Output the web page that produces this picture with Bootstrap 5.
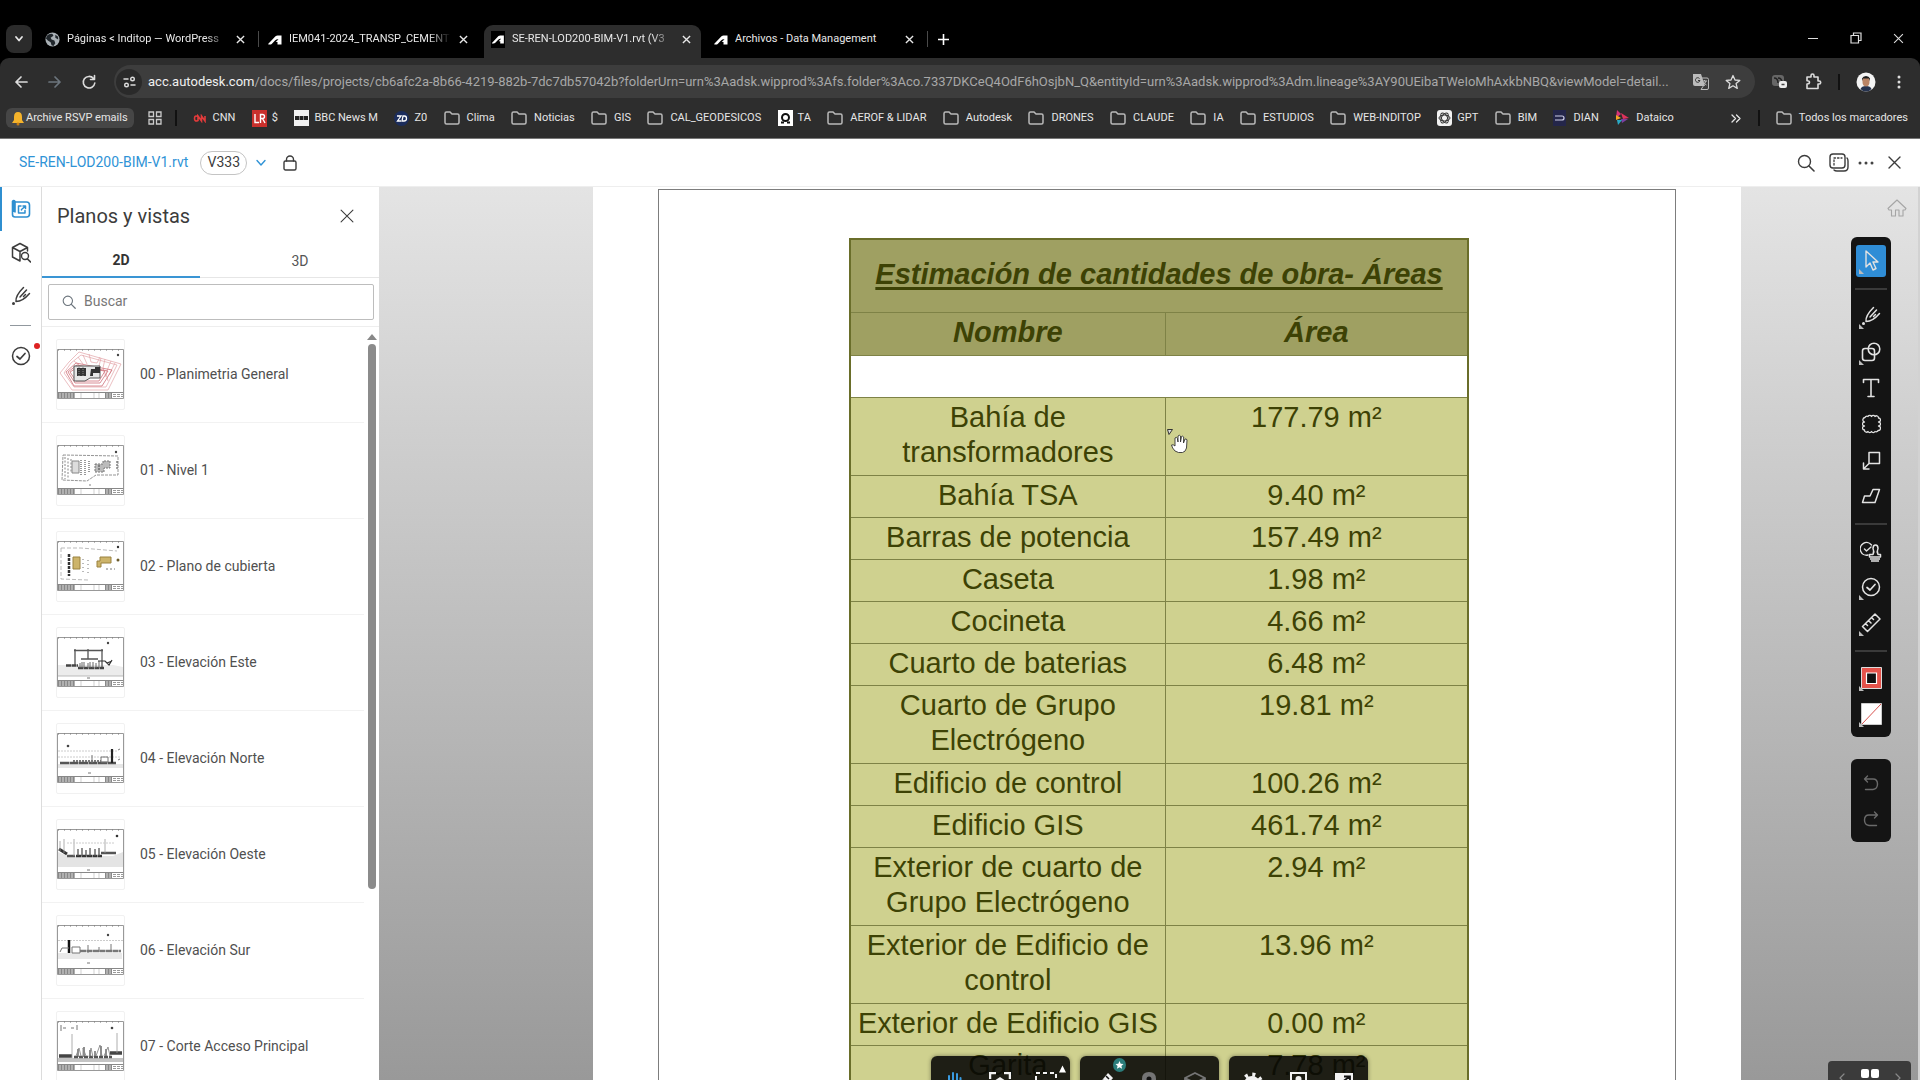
<!DOCTYPE html>
<html lang="es">
<head>
<meta charset="utf-8">
<meta name="viewport" content="width=device-width, initial-scale=1">
<title>SE-REN-LOD200-BIM-V1.rvt (V333)</title>
<link href="https://cdn.jsdelivr.net/npm/bootstrap@5.3.0/dist/css/bootstrap.min.css" rel="stylesheet">
<style>
body{font-family:Roboto,"Noto Sans",sans-serif;font-size:14px;color:#3c3c3c;background:#fff}
svg{display:block;flex:none}
.ln{fill:none;stroke:currentColor;stroke-linecap:round;stroke-linejoin:round}
.plain{background:none;border:0;padding:0;color:inherit;display:flex;align-items:center;justify-content:center;flex:none}
/* browser */
.tabstrip{background:#000;padding:25px 6px 0;height:58px;color:#e8e8e8;font-size:11px}
.tabsearch{width:26px;height:28px;border-radius:8px;background:#2b2b2b;margin-right:6px}
.btab{width:223px;height:33px;padding-right:6px;flex:none;position:relative}
.btab-in{height:33px;padding:0 10px 4px 7px;border-radius:9px 9px 0 0}
.btab-in.on{background:#2d2d2d}
.btab-in .ttl{flex:1;min-width:0;overflow:hidden;white-space:nowrap;margin-left:7px;margin-right:8px;color:#e8e8e8;text-decoration:none}
.btab-in .fade-end{-webkit-mask-image:linear-gradient(90deg,#000 86%,transparent);mask-image:linear-gradient(90deg,#000 86%,transparent)}
.btab.sep::after{content:"";position:absolute;right:2px;top:6px;width:1px;height:16px;background:#4a4a4a}
.winbtns{gap:31px;padding-right:10px;height:26px}
.navrow{background:#2d2d2d;height:46px;padding:7px 18px 6px 12px;border-radius:9px 9px 0 0;color:#dcdcdc}
.navblock{background:#000}
.omni{background:#3d3d3d;border-radius:17px;height:33px;padding:0 14px 0 2px;min-width:0}
.siteinfo{width:26px;height:26px;border-radius:50%;background:#2a2a2a}
.url{color:#a8a8a8;font-size:13px;min-width:0;white-space:nowrap;margin-left:6px}
.url b{font-weight:400;color:#f0f0f0}
.bmrow{background:#2d2d2d;height:35px;padding:0 12px 6px 6px;color:#e6e6e6;font-size:11px;border-bottom:1px solid #777}
.bmrow a{color:#e6e6e6;text-decoration:none;display:flex;align-items:center;white-space:nowrap;gap:7px}
.bmrow a.fav{gap:5px}
.bmrow a.chip{background:#464646;border-radius:6px;height:20px;padding:0 6px 0 5px;gap:1px}
.bmapps{margin:0 13px 0 14px}
.vsep{width:2px;height:16px;background:#111;flex:none}
/* app header */
.apphead{height:49px;padding:0 19px;border-bottom:1px solid #eee}
.fname{color:#2f93d6;text-decoration:none;font-size:14px;margin-right:12px}
.ver{border:1px solid #c4c4c4;border-radius:12px;height:24px;width:47px;font-size:14px;color:#3c3c3c;background:#fff;padding:0}
.headicons{gap:14px}
.headicons .tight{margin-left:-5px}
/* rail and panel */
.rail{width:42px;border-right:1px solid #dcdcdc;flex:none}
.railbtn{width:41px;height:43px}
.railbtn.on{color:#2f8fd0;border-left:2px solid #2f8fd0;height:44px;padding-right:2px}
.panel{width:337px;flex:none}
.phead{padding:17px 25px 16px 15px}
.ptitle{font-size:20px;font-weight:400;color:#3c3c3c;margin:0}
.ptabs{height:34px;border-bottom:1px solid #e6e6e6;color:#555}
.ptabs button{border:0;background:none;height:34px;padding:0;color:#555}
.ptabs .t2d{width:158px;border-bottom:2px solid #3a95d4;font-weight:700;color:#333}
.ptabs .t3d{width:179px;padding-left:21px}
.sbox{margin:6px;height:36px;border:1px solid #bdbdbd;border-radius:2px;padding:0 13px;width:326px}
.sbox input{border:0;outline:0;background:none;flex:1;min-width:0;padding:0;color:#555}
.sbox input::placeholder{color:#777;opacity:1}
.vlist{border-top:1px solid #eee}
.vitem{display:flex;align-items:center;height:96px;border-bottom:1px solid #f2f2f2;padding-left:14px;color:#505050;text-decoration:none;gap:15px}
.thumb{border:1px solid #f1f1f1;border-radius:2px;width:69px;height:71px;display:flex;align-items:center}
.sbar{width:15px;padding-top:7px;flex:none}
.sthumb{width:8px;height:545px;border-radius:4px;background:#8b8b8b;flex:none}
/* canvas */
.stage{background:linear-gradient(#e4e4e4,#c9c9c9 35%,#999);border-right:2px solid #d2d2d2;min-width:0}
.sheet{margin:0 177px 0 214px;background:#fff;padding:2px 65px 0 65px;height:100%;overflow:hidden}
.sheetframe{border:1px solid #7d7d7d;border-bottom:0;height:110%;padding:48px 0 0 190px}
.qty{width:620px;border-collapse:collapse;font-family:"Liberation Sans",Arial,sans-serif;font-size:29px;line-height:35px;color:#3d4205;text-align:center;border:2px solid #6a6e2a;table-layout:fixed}
.qty td,.qty th{border:1px solid #7e8246;padding:2px 4px 4px;vertical-align:top;background:#cfd18f}
.qty tbody .two td{height:78px}
.qty thead th{background:#9fa062;font-style:italic;font-weight:700}
.qty thead .big th{height:73px;vertical-align:middle;text-decoration:underline;text-decoration-thickness:3px;text-underline-offset:3px}
.qty thead .cols th{height:43px}
.qty .blank td{background:#fff;height:42px}
/* floating tools */
.vtools{right:27px;width:40px;background:#141414;border-radius:6px;color:#e2e2e2}
.vtools.main{top:50px;padding:6px 0 5px}
.vtools.hist{top:572px;padding:6px 0 5px;color:#6a6a6a}
.vtools button{width:40px;height:36px;position:relative}
.vtools hr{margin:9px 4px 8px;border:0;border-top:2px solid #3a3a3a;opacity:1;height:0}
.vtools .fly::before{content:"";position:absolute;left:8px;bottom:5px;border-left:5px solid #bbb;border-top:5px solid transparent}
.selbg{background:#2f8dd6;border-radius:3px;width:30px;height:32px;display:flex;align-items:center;justify-content:center}
.homebtn{right:11px;top:12px;color:#a5a5a5}
.btools{left:552px;bottom:-32px;gap:10px}
.bgroup{background:rgba(8,8,6,.89);border-radius:6px;height:56px;width:139px;color:#f2f2f2;box-shadow:0 0 4px rgba(0,0,0,.4)}
.bgroup button{width:46px;height:56px;position:relative}
.newdot{position:absolute;right:9px;top:2px}
.bgroup .corner{top:9px;right:3px}
.pager{right:7px;bottom:-28px;width:83px;height:47px;background:#3b3b3b;border-radius:4px;color:#888}
.cur{left:788px;top:242px;pointer-events:none}
</style>
</head>
<body class="overflow-hidden">
<svg width="0" height="0" class="position-absolute" aria-hidden="true">
<defs>
<symbol id="folder" viewBox="0 0 16 14"><path d="M1 2.500Q1 1 2.500 1H6l2 2h5.500Q15 3 15 4.500v7Q15 13 13.500 13h-11Q1 13 1 11.500Z" fill="none" stroke="#b9b9b9" stroke-width="1.500"/></symbol>
<symbol id="x" viewBox="0 0 10 10"><path d="M1 1l8 8M9 1L1 9" fill="none" stroke="currentColor" stroke-width="1.500"/></symbol>
<symbol id="adsk" viewBox="0 0 14 10"><path d="M.300 8.800L7.500 1.200Q8.500.500 9.500.500H13.500V9.500H9.500V7H7.800L10.500 4.300Q8.500 4 7 5.500L3.700 9Q3 9.500 2 9.500H.300Z" fill="#fff"/></symbol>
<symbol id="pen" viewBox="0 0 20 20"><path class="ln" d="M5 15.500C4.500 12 6 8 12.500 1.500M5 15.500C9 15.500 13 14 18.500 7.500M9 11L15.500 4M12.500 10.500L14.500 8.500" stroke-width="1.500"/><circle cx="2.500" cy="17.500" r="1.500" fill="currentColor"/></symbol>
<symbol id="okc" viewBox="0 0 20 20"><circle class="ln" cx="10" cy="10" r="8.500" stroke-width="1.500"/><path class="ln" d="M6 10.500l3 2.500 5-5.500" stroke-width="1.700"/></symbol>
<symbol id="mag" viewBox="0 0 18 18"><circle class="ln" cx="7.500" cy="7.500" r="6" stroke-width="1.400"/><path class="ln" d="M12 12l5 5" stroke-width="1.600"/></symbol>
<!-- title block shared by every drawing sheet -->
<symbol id="fr" viewBox="0 0 67 50"><path d="M.5 .5h66v49H.5z" fill="#fff" stroke="#999"/><path d="M1 1h65" stroke="#777" stroke-dasharray="1 5"/><path d="M.5 43.500h66" stroke="#888"/><path d="M1 46.500h17M48 46.500h7" stroke="#b0b0b0" stroke-width="5"/><path d="M1 46.500h17M48 46.500h7" stroke="#888" stroke-width="5" stroke-dasharray="1 2"/><path d="M56 45.500h10M56 47.500h10" stroke="#999" stroke-dasharray="3 1"/><path d="M24 44v5M37 44v5M42 44v5" stroke="#bbb" stroke-width=".700"/></symbol>
</defs>
</svg>
<div class="vh-100 d-flex flex-column">
<header>
 <div class="tabstrip d-flex">
  <button class="plain tabsearch" aria-label="Buscar pestañas"><svg width="10" height="8" viewBox="0 0 10 8"><path class="ln" d="M2 2l3 3.500L8 2" stroke-width="1.800"/></svg></button>
  <div class="btab sep"><div class="btab-in d-flex align-items-center"><svg width="15" height="15" viewBox="0 0 16 16"><circle cx="8" cy="8" r="7.500" fill="#a9b0b5"/><path d="M2 4q3-3 6-2l1 2-3 2 1 2 3 1 1 3-2 3-2-1-1-3-3-2-2-2zM11 3l3 2v3l-3-2z" fill="#20262b"/></svg><a href="#" class="ttl fade-end">Páginas &lt; Inditop — WordPress</a><button class="plain" aria-label="Cerrar"><svg width="9" height="9"><use href="#x"/></svg></button></div></div>
  <div class="btab"><div class="btab-in d-flex align-items-center"><svg width="14" height="10"><use href="#adsk"/></svg><a href="#" class="ttl fade-end">IEM041-2024_TRANSP_CEMENT</a><button class="plain" aria-label="Cerrar"><svg width="9" height="9"><use href="#x"/></svg></button></div></div>
  <div class="btab"><div class="btab-in on d-flex align-items-center"><span class="bg-black d-flex align-items-center justify-content-center py-1"><svg width="14" height="9"><use href="#adsk"/></svg></span><a href="#" class="ttl fade-end">SE-REN-LOD200-BIM-V1.rvt (V3</a><button class="plain" aria-label="Cerrar"><svg width="9" height="9"><use href="#x"/></svg></button></div></div>
  <div class="btab sep"><div class="btab-in d-flex align-items-center"><svg width="14" height="10"><use href="#adsk"/></svg><a href="#" class="ttl">Archivos - Data Management</a><button class="plain" aria-label="Cerrar"><svg width="9" height="9"><use href="#x"/></svg></button></div></div>
  <button class="plain ms-2 mb-1" aria-label="Nueva pestaña"><svg width="11" height="11" viewBox="0 0 11 11"><path d="M5.500 0v11M0 5.500h11" stroke="#fff" stroke-width="1.600"/></svg></button>
  <div class="winbtns d-flex ms-auto">
   <button class="plain" aria-label="Minimizar"><svg width="11" height="11"><path d="M0 5.500h10" stroke="#ddd"/></svg></button>
   <button class="plain" aria-label="Restaurar"><svg width="12" height="12"><path d="M1 3.500h7.500V11H1zM3.500 3V1H11v7.500H9" fill="none" stroke="#ddd" stroke-width="1.200"/></svg></button>
   <button class="plain" aria-label="Cerrar ventana"><svg width="11" height="11" viewBox="0 0 10 10"><path d="M1 1l8 8M9 1L1 9" stroke="#ddd"/></svg></button>
  </div>
 </div>
 <div class="navblock"><div class="navrow d-flex align-items-center">
  <button class="plain" aria-label="Atrás"><svg width="18" height="14" viewBox="0 0 18 14"><path class="ln" d="M15 7H4M9 2L4 7l5 5" stroke-width="1.700"/></svg></button>
  <button class="plain text-secondary ms-3" aria-label="Adelante"><svg width="18" height="14" viewBox="0 0 18 14"><path class="ln" d="M3 7h11M9 2l5 5-5 5" stroke-width="1.700"/></svg></button>
  <button class="plain ms-3 me-3" aria-label="Recargar"><svg width="18" height="16" viewBox="0 0 18 16"><path class="ln" d="M13.500 4.500A5.800 5.800 0 1 0 14.800 9M14.500 1.500v4h-4" stroke-width="1.600"/></svg></button>
  <div class="omni d-flex align-items-center flex-grow-1">
   <button class="plain siteinfo" aria-label="Información del sitio"><svg width="13" height="12" viewBox="0 0 13 12"><path class="ln" d="M1 3h4M8 9h4" stroke-width="1.500"/><circle class="ln" cx="9.500" cy="3" r="1.800" stroke-width="1.400"/><circle class="ln" cx="3.500" cy="9" r="1.800" stroke-width="1.400"/></svg></button>
   <div class="url flex-grow-1"><b>acc.autodesk.com</b>/docs/files/projects/cb6afc2a-8b66-4219-882b-7dc7db57042b?folderUrn=urn%3Aadsk.wipprod%3Afs.folder%3Aco.7337DKCeQ4OdF6hOsjbN_Q&amp;entityId=urn%3Aadsk.wipprod%3Adm.lineage%3AY90UEibaTWeIoMhAxkbNBQ&amp;viewModel=detail...</div>
   <button class="plain me-3" aria-label="Traducir"><svg width="16" height="16" viewBox="0 0 16 16"><path d="M0 0h8l4 12H2Q0 12 0 10z" fill="#bbb"/><path d="M8 4h6q1.500 0 1.500 1.500V14q0 1.500-1.500 1.500H8l2-3z" fill="none" stroke="#bbb"/><path d="M9 7h5M11.500 6v1M13 7q-1 3-3 4M10.500 8q1 2 3 3" stroke="#bbb" fill="none"/><path d="M6.500 4.500A2.300 2.300 0 1 0 7 6.500H5" stroke="#333" fill="none"/></svg></button>
   <button class="plain" aria-label="Marcador"><svg width="16" height="16" viewBox="0 0 16 16"><path class="ln" d="M8 1.500l2 4.500 4.800.400-3.700 3.200 1.200 4.800L8 11.800l-4.300 2.600 1.200-4.800L1.200 6.400 6 6z" stroke-width="1.300"/></svg></button>
  </div>
  <button class="plain ms-3" aria-label="Extensión"><svg width="18" height="16" viewBox="0 0 18 16"><rect x="1" y="1" width="12" height="11" rx="3" fill="#666"/><path d="M3 4q4 0 4 5M7 4q4 0 4 5" stroke="#222" fill="none" stroke-width="1.500"/><rect x="8" y="7" width="8" height="7" rx="2" fill="#eee"/><path d="M10.500 10.500h3" stroke="#444" stroke-width="1.500"/></svg></button>
  <button class="plain ms-3" aria-label="Extensiones"><svg width="17" height="17" viewBox="0 0 17 17"><path class="ln" d="M2 4h4V2.500a1.500 1.500 0 0 1 3 0V4h4v4h1.200a1.500 1.500 0 0 1 0 3H13v4.500H2V11q2.500 0 2.500-1.700T2 7.700z" stroke-width="1.600"/></svg></button>
  <span class="vsep ms-3"></span>
  <button class="plain ms-3" aria-label="Perfil"><svg width="20" height="20" viewBox="0 0 20 20"><circle cx="10" cy="10" r="9.500" fill="#f4f4f4"/><path d="M4.500 17q1-3 5.500-3t5.500 3q-2 2.500-5.500 2.500T4.500 17z" fill="#26334f"/><path d="M6.500 8q0-3 3.500-3t3.500 3v2q0 4-3.500 4.500Q6.500 14 6.500 10z" fill="#b98466"/><path d="M6 9V6.500Q7 4 10 4t4 2.500V9l-1-2.500H7z" fill="#1c1c1c"/></svg></button>
  <button class="plain ms-3 ps-1" aria-label="Menú"><svg width="6" height="16" viewBox="0 0 6 16"><g fill="#ddd"><circle cx="3" cy="3" r="1.500"/><circle cx="3" cy="8" r="1.500"/><circle cx="3" cy="13" r="1.500"/></g></svg></button>
 </div></div>
 <nav class="bmrow d-flex align-items-center" aria-label="Marcadores">
  <a href="#" class="chip"><svg width="14" height="15" viewBox="0 0 14 15"><path d="M7 1q4 0 4 5v3l2 3H1l2-3V6q0-5 4-5z" fill="#f5b32b"/><circle cx="7" cy="13" r="1.500" fill="#c77d13"/></svg>Archive RSVP emails</a>
  <a href="#" class="bmapps" aria-label="Aplicaciones"><svg width="14" height="14" viewBox="0 0 14 14"><path d="M1 1h4.500v4.500H1zM8.500 1H13v4.500H8.500zM1 8.500h4.500V13H1zM8.500 8.500H13V13H8.500z" fill="none" stroke="#ccc" stroke-width="1.300"/></svg></a>
  <span class="vsep me-3"></span>
  <div class="d-flex align-items-center justify-content-between flex-grow-1">
  <a href="#" class="fav"><svg width="15" height="9" viewBox="0 0 15 9"><path d="M5 2.500Q1.500 1 1.500 4.500T5 6.500V2l3.500 5V2l3.500 5V2" fill="none" stroke="#e33b3b" stroke-width="1.600"/></svg>CNN</a>
  <a href="#" class="fav"><svg width="15" height="17" viewBox="0 0 15 17"><path d="M0 0h15v17H0z" fill="#c9302c"/><path d="M3 4v8.500h4M8.500 13V4.500h2q2 0 2 2t-2 2h-2M10.500 8.500l2.500 4.500" stroke="#fff" stroke-width="1.400" fill="none"/></svg>$</a>
  <a href="#" class="fav"><svg width="15" height="16" viewBox="0 0 15 16"><path d="M0 0h15v16H0z" fill="#f2f2f2"/><path d="M1 6h4v4H1zM5.500 6h4v4h-4zM10 6h4v4h-4z" fill="#222"/></svg>BBC News M</a>
  <a href="#" class="fav"><svg width="15" height="15" viewBox="0 0 15 15"><circle cx="7.500" cy="7.500" r="7.500" fill="#1c2d5c"/><path d="M3 5h4L3.500 10H7M9 5h1.500q2 0 2 2.500T10 10H8z" fill="none" stroke="#fff" stroke-width="1.300"/></svg>Z0</a>
  <a href="#"><svg width="16" height="14"><use href="#folder"/></svg>Clima</a>
  <a href="#"><svg width="16" height="14"><use href="#folder"/></svg>Noticias</a>
  <a href="#"><svg width="16" height="14"><use href="#folder"/></svg>GIS</a>
  <a href="#"><svg width="16" height="14"><use href="#folder"/></svg>CAL_GEODESICOS</a>
  <a href="#" class="fav"><svg width="15" height="16" viewBox="0 0 15 16"><path d="M0 0h15v16H0z" fill="#fff"/><circle cx="7.500" cy="7.500" r="3.500" fill="none" stroke="#111" stroke-width="2"/><path d="M3 12.500h3M9 12.500h3" stroke="#111" stroke-width="2"/></svg>TA</a>
  <a href="#"><svg width="16" height="14"><use href="#folder"/></svg>AEROF &amp; LIDAR</a>
  <a href="#"><svg width="16" height="14"><use href="#folder"/></svg>Autodesk</a>
  <a href="#"><svg width="16" height="14"><use href="#folder"/></svg>DRONES</a>
  <a href="#"><svg width="16" height="14"><use href="#folder"/></svg>CLAUDE</a>
  <a href="#"><svg width="16" height="14"><use href="#folder"/></svg>IA</a>
  <a href="#"><svg width="16" height="14"><use href="#folder"/></svg>ESTUDIOS</a>
  <a href="#"><svg width="16" height="14"><use href="#folder"/></svg>WEB-INDITOP</a>
  <a href="#" class="fav"><svg width="15" height="16" viewBox="0 0 15 16"><rect width="15" height="16" rx="3" fill="#f2f2f2"/><g fill="none" stroke="#333"><ellipse cx="7.500" cy="8" rx="5.500" ry="3"/><ellipse cx="7.500" cy="8" rx="5.500" ry="3" transform="rotate(60 7.500 8)"/><ellipse cx="7.500" cy="8" rx="5.500" ry="3" transform="rotate(120 7.500 8)"/></g></svg>GPT</a>
  <a href="#"><svg width="16" height="14"><use href="#folder"/></svg>BIM</a>
  <a href="#"><svg width="13" height="16" viewBox="0 0 13 16"><path d="M0 0h13v16H0z" fill="#24264a"/><path d="M2 6h7q2 0 2 2t-2 2H2" fill="none" stroke="#d0d0e8" stroke-width="1.200"/></svg>DIAN</a>
  <a href="#"><svg width="14" height="16" viewBox="0 0 14 16"><path d="M2 0l4 4-5 4z" fill="#d8337a"/><path d="M1 5l5 3-5 2z" fill="#f6a623"/><path d="M6 3l8 5-6 1z" fill="#e0325c"/><path d="M6 9l7 0-6 4z" fill="#7b3fa0"/><path d="M2 10l5 0-4 5z" fill="#29a9c5"/></svg>Dataico</a>
  </div>
  <button class="plain ms-5 ps-2" aria-label="Más marcadores"><svg width="12" height="9" viewBox="0 0 12 9"><path class="ln" d="M2 1l3.500 3.500L2 8M6.500 1L10 4.500 6.500 8" stroke-width="1.300"/></svg></button>
  <span class="vsep ms-3 me-3"></span>
  <a href="#"><svg width="16" height="14"><use href="#folder"/></svg>Todos los marcadores</a>
 </nav>
</header>

<div class="apphead d-flex align-items-center">
 <a href="#" class="fname">SE-REN-LOD200-BIM-V1.rvt</a>
 <button class="ver">V333</button>
 <button class="plain ms-2" aria-label="Versiones"><svg width="12" height="8" viewBox="0 0 12 8" color="#2f93d6"><path class="ln" d="M2 1.500l4 4.500 4-4.500" stroke-width="1.400"/></svg></button>
 <button class="plain ms-3" aria-label="Bloqueado"><svg width="14" height="16" viewBox="0 0 14 16"><rect class="ln" x="1" y="6" width="12" height="9" rx="1.500" stroke-width="1.400"/><path class="ln" d="M3.500 6V4.500a3.500 3.500 0 0 1 7 0V6" stroke-width="1.400"/></svg></button>
 <div class="headicons d-flex align-items-center ms-auto">
 <button class="plain" aria-label="Buscar"><svg width="18" height="18"><use href="#mag"/></svg></button>
 <button class="plain" aria-label="Comparar"><svg width="20" height="19" viewBox="0 0 20 19"><rect class="ln" x="1" y="1" width="15" height="14" rx="3" stroke-width="1.400"/><path class="ln" d="M18 5q1 1 1 3v6q0 4-4 4H8q-2 0-3-1" stroke-width="1.400"/><path class="ln" d="M5 12V5h8" stroke-width="1.300" stroke-dasharray="1.500 2"/></svg></button>
 <button class="plain tight" aria-label="Más"><svg width="16" height="4" viewBox="0 0 16 4"><g fill="#444"><circle cx="2" cy="2" r="1.500"/><circle cx="8" cy="2" r="1.500"/><circle cx="14" cy="2" r="1.500"/></g></svg></button>
 <button class="plain" aria-label="Cerrar"><svg width="13" height="13" viewBox="0 0 13 13"><path class="ln" d="M1 1l11 11M12 1L1 12" stroke-width="1.400"/></svg></button>
 </div>
</div>

<div class="d-flex flex-grow-1 overflow-hidden">
 <nav class="rail d-flex flex-column" aria-label="Herramientas">
  <button class="plain railbtn on" aria-label="Planos"><svg width="20" height="20" viewBox="0 0 20 20"><path class="ln" d="M4 3h11.500Q18.500 3 18.500 6v9q0 3-3 3H4q-2.500 0-2.500-2.500V2.500Q2.700.500 4 2.500V13" stroke-width="1.600"/><path d="M1.500 2.500Q3 1 4 2.500V13H1.500z" fill="currentColor"/><path class="ln" d="M10 7H7.500v7H14v-2.500M12 7h2.500v2.500M14 7.500L10.500 10.500V11" stroke-width="1.500"/></svg></button>
  <button class="plain railbtn" aria-label="Explorar modelo"><svg width="20" height="21" viewBox="0 0 20 21"><path class="ln" d="M9 19l-7.500-4V5.500L9 1.500l7.500 4V9M1.500 5.500L9 9.500l7.500-4M9 9.500V19" stroke-width="1.500"/><circle class="ln" cx="14" cy="14" r="3.500" stroke-width="1.400"/><path class="ln" d="M16.500 17l3 3" stroke-width="1.600"/></svg></button>
  <button class="plain railbtn" aria-label="Marcas"><svg width="20" height="20"><use href="#pen"/></svg></button>
  <hr class="w-50 mx-auto mb-0 mt-2 border-secondary opacity-75">
  <button class="plain railbtn position-relative mt-2" aria-label="Incidencias"><svg width="20" height="20"><use href="#okc"/></svg><svg class="position-absolute end-0 top-0 mt-2 me-0" width="8" height="8"><circle cx="4" cy="4" r="3" fill="#dd2222"/></svg></button>
 </nav>
 <aside class="panel d-flex flex-column">
  <div class="phead d-flex align-items-center justify-content-between"><h1 class="ptitle">Planos y vistas</h1><button class="plain" aria-label="Cerrar panel"><svg width="14" height="14" viewBox="0 0 13 13"><path class="ln" d="M1 1l11 11M12 1L1 12"/></svg></button></div>
  <div class="ptabs d-flex"><button class="t2d">2D</button><button class="t3d">3D</button></div>
  <label class="sbox d-flex align-items-center gap-2"><svg width="14" height="14" class="text-secondary"><use href="#mag" width="14" height="14"/></svg><input type="text" placeholder="Buscar" aria-label="Buscar"></label>
  <div class="vlist d-flex flex-grow-1 overflow-hidden">
   <div class="flex-grow-1">
    <a href="#" class="vitem"><span class="thumb"><svg width="67" height="50" viewBox="0 0 67 50"><use href="#fr"/><g fill="none" stroke="#e2a3a8" stroke-width=".700"><path d="M3 24L12 13 22 3l42 12-13 26H15z"/><path d="M7 24l7-10 10-8 36 10-11 22H17z"/><path d="M32 5l2 8 6 1 3-6M44 9l-2 8M48 10l-2 9 3 9M54 12l-5 12 2 8M58 14l-6 12"/><path d="M26 6l4 9M21 8l5 7M17 12l5 4"/></g><g fill="none" stroke="#cf7078" stroke-width=".800"><path d="M9 23l10-9 36 7-10 16H17z"/><path d="M11 23l9-7 31 6-8 12H18z"/><path d="M13 23l8-5 27 4-6 10H19z"/></g><path d="M17 17h26v12H33l-5 3H17z" fill="#e6e6e6" stroke="#555"/><path d="M20 19h9v8h-9zM34 20h4v-2h5v6h-7v3h-3z" fill="#333"/><path d="M22 18v9M26 18v9" stroke="#888" stroke-dasharray="1 1"/><circle cx="61" cy="6" r="1.200" fill="#444"/></svg></span>00 - Planimetria General</a>
    <a href="#" class="vitem"><span class="thumb"><svg width="67" height="50" viewBox="0 0 67 50"><use href="#fr"/><path d="M6 10l55 1v19H39l-9 6-25-1z" fill="none" stroke="#888" stroke-width=".900" stroke-dasharray="3 1"/><path d="M8 12v22M11 13v20M14 14v14" stroke="#888" stroke-dasharray="2 1.500"/><path d="M15 16h7v12h-7z" fill="#ddd" stroke="#888"/><path d="M24 15v16M28 15v15M32 16v12" stroke="#999" stroke-width="2" stroke-dasharray="1 1"/><path d="M38 19h8v-3h7v7h-6v4h-9z" fill="#bbb" stroke="#777" stroke-dasharray="2 1"/><path d="M42 20v6M60 16v9" stroke="#444" stroke-dasharray="2 1"/><circle cx="59" cy="7" r="1.200" fill="#444"/><circle cx="33" cy="40" r=".700" fill="#555"/></svg></span>01 - Nivel 1</a>
    <a href="#" class="vitem"><span class="thumb"><svg width="67" height="50" viewBox="0 0 67 50"><use href="#fr"/><path d="M4 7l20 0 36 3M4 7v31l27 1" fill="none" stroke="#aaa" stroke-width=".800" stroke-dasharray="4 2"/><path d="M12 13v22" stroke="#333" stroke-width="2.500" stroke-dasharray="3 1"/><path d="M16 16h7v12h-7z" fill="#cdb46a" stroke="#9a8240"/><path d="M43 16h11v6H44v4h-4v-6h3z" fill="#cdb46a" stroke="#9a8240"/><path d="M26 18v13M31 19v13" stroke="#777" stroke-dasharray="1 3"/><circle cx="61" cy="6" r="1.200" fill="#333"/><circle cx="61" cy="19" r="1.500" fill="#6a5a2a"/><path d="M49 28h9" stroke="#777" stroke-dasharray="2 2"/></svg></span>02 - Plano de cubierta</a>
    <a href="#" class="vitem"><span class="thumb"><svg width="67" height="50" viewBox="0 0 67 50"><use href="#fr"/><path d="M1 28h55l10 2v9H1z" fill="#ececec"/><path d="M18 12v17M45 12v18M31 12v10M17 13.500h29M24 22h17" fill="none" stroke="#555" stroke-width="1.300"/><path d="M9 28.500h12M21 31h26" stroke="#444" stroke-width="2.500" stroke-dasharray="5 .500"/><path d="M23 26v5M25 25v6M27 25v6M31 26v5M33 25v6M36 25v6M39 26v5M42 24v7" stroke="#666"/><path d="M41 24h7l4 4 3-5M50 26l5-2" stroke="#333" fill="none" stroke-width="1.200"/><circle cx="51" cy="6" r="1.200" fill="#444"/><path d="M1 39h65" stroke="#bbb"/><path d="M30 41h3" stroke="#777"/></svg></span>03 - Elevación Este</a>
    <a href="#" class="vitem"><span class="thumb"><svg width="67" height="50" viewBox="0 0 67 50"><use href="#fr"/><path d="M1 31h65v4H1z" fill="#e6e6e6"/><path d="M1 18h60M1 24h62" stroke="#ccc" stroke-dasharray="2 1"/><path d="M3 30h56" stroke="#555" stroke-width="2.500" stroke-dasharray="9 .500"/><path d="M16 28h28" stroke="#777" stroke-width="2" stroke-dasharray="2 1"/><path d="M35 22v8M44 24h7v5h-7z" fill="none" stroke="#777"/><path d="M55 16v14" stroke="#222" stroke-width="2.200"/><circle cx="11" cy="13" r="1.300" fill="#444"/><path d="M31 40h3M61 17l2-1M61 27l2-1" stroke="#777"/></svg></span>04 - Elevación Norte</a>
    <a href="#" class="vitem"><span class="thumb"><svg width="67" height="50" viewBox="0 0 67 50"><use href="#fr"/><path d="M1 23l10 4h45l10-4v15H1z" fill="#e4e4e4"/><path d="M2 20l8 5" stroke="#333" stroke-width="3"/><path d="M10 27h8M44 24h15" stroke="#555" stroke-width="2.500"/><path d="M19 27h26" stroke="#333" stroke-width="2.500" stroke-dasharray="5 .500"/><path d="M21 20v7M25 19v8M29 21v6M33 19v8M38 20v7M42 19v8" stroke="#555" stroke-width="1.300"/><path d="M17 10v17M48 10v14M3 12v10M7 10v14" stroke="#999" stroke-width=".800"/><path d="M10 14h48" stroke="#ccc" stroke-dasharray="2 1"/><circle cx="60" cy="7" r="1.300" fill="#333"/><path d="M30 41h3" stroke="#777"/></svg></span>05 - Elevación Oeste</a>
    <a href="#" class="vitem"><span class="thumb"><svg width="67" height="50" viewBox="0 0 67 50"><use href="#fr"/><path d="M1 28h64v6H1z" fill="#e9e9e9"/><path d="M1 15.500h65" stroke="#ccc" stroke-dasharray="2 1"/><path d="M12 15v13" stroke="#111" stroke-width="2.500"/><path d="M3 27l2-4h7M15 22h8v6h-8z" fill="none" stroke="#777"/><path d="M23 26h41" stroke="#777" stroke-width="2.500" stroke-dasharray="6 .500"/><path d="M31 20v8M42 22v5M54 19v8" stroke="#777"/><circle cx="51" cy="10" r="1.200" fill="#444"/><path d="M30 38h3" stroke="#777"/></svg></span>06 - Elevación Sur</a>
    <a href="#" class="vitem"><span class="thumb"><svg width="67" height="50" viewBox="0 0 67 50"><use href="#fr"/><path d="M1 37h65v4H1z" fill="#c4c4c4"/><path d="M2 35h13M53 32h12" stroke="#444" stroke-width="3.500"/><path d="M15 13v24M60 12v20" stroke="#999" stroke-width=".800"/><path d="M17 36h38" stroke="#555" stroke-width="2.500" stroke-dasharray="4 1"/><path d="M21 36v-8M27 36v-10M33 36v-7M38 36v-6M44 36V25M49 36v-8" stroke="#555" stroke-width="1.300"/><path d="M19 35l3-8 2 8M26 36v-9l3 8M32 36l2-9 2 9M39 35l4-11 2 11M47 35l4-9 2 9" fill="none" stroke="#888" stroke-width=".900"/><path d="M4 4v6M6 7h3M14 7h3M20 4v5" stroke="#777"/><circle cx="55" cy="7" r="1.300" fill="#444"/></svg></span>07 - Corte Acceso Principal</a>
   </div>
   <div class="sbar d-flex flex-column align-items-center gap-1"><svg width="10" height="6"><path d="M0 6l5-6 5 6z" fill="#888"/></svg><div class="sthumb"></div></div>
  </div>
 </aside>
 <main class="stage flex-grow-1 position-relative overflow-hidden">
  <div class="sheet"><div class="sheetframe">
   <table class="qty">
    <colgroup><col style="width:51%"><col></colgroup>
    <thead><tr class="big"><th colspan="2">Estimación de cantidades de obra- Áreas</th></tr><tr class="cols"><th>Nombre</th><th>Área</th></tr></thead>
    <tbody>
    <tr class="blank"><td colspan="2"></td></tr>
    <tr class="two"><td>Bahía de transformadores</td><td>177.79 m²</td></tr>
    <tr><td>Bahía TSA</td><td>9.40 m²</td></tr>
    <tr><td>Barras de potencia</td><td>157.49 m²</td></tr>
    <tr><td>Caseta</td><td>1.98 m²</td></tr>
    <tr><td>Cocineta</td><td>4.66 m²</td></tr>
    <tr><td>Cuarto de baterias</td><td>6.48 m²</td></tr>
    <tr class="two"><td>Cuarto de Grupo Electrógeno</td><td>19.81 m²</td></tr>
    <tr><td>Edificio de control</td><td>100.26 m²</td></tr>
    <tr><td>Edificio GIS</td><td>461.74 m²</td></tr>
    <tr class="two"><td>Exterior de cuarto de Grupo Electrógeno</td><td>2.94 m²</td></tr>
    <tr class="two"><td>Exterior de Edificio de control</td><td>13.96 m²</td></tr>
    <tr><td>Exterior de Edificio GIS</td><td>0.00 m²</td></tr>
    <tr><td>Garita</td><td>7.78 m²</td></tr>
    </tbody>
   </table>
  </div></div>
  <svg class="cur position-absolute" width="24" height="26" viewBox="0 0 24 26"><path d="M.500 .500h5L2 5.500z" fill="#ddd" stroke="#333"/><path d="M8 22q-3-3-3.500-6 1.500-1 3.500 1V9q1.500-1.500 2.300.300L11 13V7q1.500-1.500 2.500 0v6l1-5.500q1.500-1 2.200.500L16.500 14l1.500-4q1.500-.500 2 1l-.500 8q-1 4-4 4.500h-4z" fill="#fff" stroke="#333" stroke-width=".900"/></svg>
  <button class="plain position-absolute homebtn" aria-label="Inicio"><svg width="20" height="18" viewBox="0 0 20 18"><path class="ln" d="M1 9.500L10 1l9 8.500-1 1.500h-2v6h-4v-6H8.500v6h-4v-6H2z" stroke-width="1.100"/></svg></button>
  <div class="vtools main position-absolute">
   <button class="plain fly" aria-label="Seleccionar"><span class="selbg"><svg width="16" height="22" viewBox="0 0 16 22"><path class="ln" d="M3 1v16l4-4 3 7 3-1.500-3-6.500h5z" stroke-width="1.400" stroke="#fff"/></svg></span></button>
   <hr>
   <button class="plain fly" aria-label="Lápiz"><svg width="20" height="20"><use href="#pen"/></svg></button>
   <button class="plain fly" aria-label="Formas"><svg width="20" height="20" viewBox="0 0 20 20"><rect class="ln" x="1.500" y="6.500" width="12" height="12" rx="2.500" stroke-width="1.600"/><circle class="ln" cx="13" cy="7" r="5.800" stroke-width="1.600"/></svg></button>
   <button class="plain" aria-label="Texto"><svg width="18" height="20" viewBox="0 0 18 20"><path class="ln" d="M1.500 4.500v-3h15v3M9 1.500v17M6 18.500h6" stroke-width="1.600"/></svg></button>
   <button class="plain" aria-label="Nube"><svg width="19" height="20" viewBox="0 0 19 20"><path class="ln" d="M3 3.500A2 2 0 0 1 6 2.500A2 2 0 0 1 9.500 2.500A2 2 0 0 1 13 2.500A2 2 0 0 1 16.500 4A2 2 0 0 1 16.500 8A2 2 0 0 1 16.500 12A2 2 0 0 1 16 16.500A2 2 0 0 1 13 17.500A2 2 0 0 1 9.500 17.500A2 2 0 0 1 6 17.500A2 2 0 0 1 2.500 16A2 2 0 0 1 2.500 12A2 2 0 0 1 2.500 8A2.300 2.300 0 0 1 3 3.500z" stroke-width="1.300"/></svg></button>
   <button class="plain" aria-label="Llamada"><svg width="19" height="19" viewBox="0 0 19 19"><path class="ln" d="M7 1.500h10.500v11H7zM7 12.500l-5 5M1.500 12v6H7" stroke-width="1.500"/></svg></button>
   <button class="plain" aria-label="Polígono"><svg width="20" height="16" viewBox="0 0 20 16"><path class="ln" d="M1.500 14.500L3.500 8H9l3-6.500h6.500L14 14.500z" stroke-width="1.500"/></svg></button>
   <hr>
   <button class="plain" aria-label="Sello"><svg width="22" height="21" viewBox="0 0 22 21"><path class="ln" d="M8 14A6.300 6.300 0 1 1 11.500 4M4.500 8l2 2L11 6" stroke-width="1.400"/><path class="ln" d="M13 13.500q1.500-3 0-6 0-3.500 2.500-3.500T18 7.500q-1.500 3 0 6h2.500V16H9.500v-2.500z" stroke-width="1.500"/><path d="M10 18h10M11 20h8" stroke="currentColor" stroke-width="1.300"/></svg></button>
   <button class="plain fly" aria-label="Incidencia"><svg width="20" height="20"><use href="#okc"/></svg></button>
   <button class="plain fly" aria-label="Medir"><svg width="20" height="20" viewBox="0 0 20 20"><path class="ln" d="M1.500 13.500L14 1l5 5L6.500 18.500zM4.500 10.500l2 2M7.500 7.500l2.500 2.500M10.500 4.500l2 2" stroke-width="1.500"/></svg></button>
   <hr>
   <button class="plain fly" aria-label="Color de trazo"><svg width="21" height="22" viewBox="0 0 21 22"><path d="M.500.500h20v21H.500z" fill="#e5534b" stroke="#ddd"/><path d="M5.500 6h10v10.500h-10z" fill="#111" stroke="#fff" stroke-width="1.200"/></svg></button>
   <button class="plain fly" aria-label="Color de relleno"><svg width="21" height="22" viewBox="0 0 21 22"><path d="M.500.500h20v21H.500z" fill="#fff" stroke="#ccc"/><path d="M1 21L20 1" stroke="#d9534f"/></svg></button>
  </div>
  <div class="vtools hist position-absolute">
   <button class="plain" aria-label="Deshacer"><svg width="16" height="16" viewBox="0 0 16 16"><path class="ln" d="M4.500 1L1.500 4l3 3M1.500 4H10q4.500 0 4.500 5T10 14.500H2.500" stroke-width="1.400"/></svg></button>
   <button class="plain" aria-label="Rehacer"><svg width="16" height="16" viewBox="0 0 16 16"><path class="ln" d="M11.500 1l3 3-3 3M14.500 4H6Q1.500 4 1.500 9T6 14.500h7.500" stroke-width="1.400"/></svg></button>
  </div>
  <div class="btools position-absolute d-flex">
   <div class="bgroup d-flex"><button class="plain" aria-label="Encuadre"><svg width="20" height="26" viewBox="0 0 20 26" color="#3a9be0"><path d="M5 14V5M9 12V2M13 12V3M16.500 14V7" stroke="currentColor" stroke-width="2" stroke-linecap="round"/><path d="M4 12h13.500v6q-1 6-6 6-4 0-7-5l-3-5q1-1.500 3 .500z" fill="currentColor"/></svg></button><button class="plain" aria-label="Ajustar"><svg width="22" height="24" viewBox="0 0 22 24"><path d="M1 7V1h6M15 1h6v6M1 17v6h6M15 23h6v-6" fill="none" stroke="currentColor" stroke-width="2.500"/><path d="M11 5l6 4v7l-6 4-6-4V9z" fill="currentColor"/></svg></button><button class="plain" aria-label="Zoom a ventana"><svg width="22" height="24" viewBox="0 0 22 24"><path d="M1 1h20v22H1z" fill="none" stroke="currentColor" stroke-width="2" stroke-dasharray="4 3"/></svg><svg class="newdot corner" width="7" height="8" viewBox="0 0 7 7"><path d="M0 7l3.500-7L7 7z" fill="#fff"/></svg></button></div>
   <div class="bgroup d-flex"><button class="plain" aria-label="Medición"><svg width="24" height="26" viewBox="0 0 24 26"><path d="M2 20L17 2l5 5L7 25z" fill="currentColor"/><path d="M8 13l3 3M11.500 9l3 3M15 5l3 3" stroke="#111" stroke-width="1.500"/></svg><svg class="newdot end-0" width="13" height="14" viewBox="0 0 13 14"><ellipse cx="6.500" cy="7" rx="6.500" ry="7" fill="#2b7d7b"/><path d="M6.500 3l1.200 2.700 2.800.300-2.100 1.900.7 2.800-2.600-1.500-2.600 1.500.7-2.800L2.500 6l2.800-.3z" fill="#fff"/></svg></button><button class="plain" aria-label="Ubicación"><svg width="18" height="26" viewBox="0 0 18 26"><path d="M9 1q7 0 7 7 0 6-7 17Q2 14 2 8q0-7 7-7z" fill="#747474"/><circle cx="9" cy="8" r="2.500" fill="#111"/></svg></button><button class="plain" aria-label="Modelo"><svg width="22" height="26" viewBox="0 0 22 26"><path d="M11 2l10 5v12l-10 5-10-5V7zM1 7l10 5 10-5M11 12v12" fill="none" stroke="#747474" stroke-width="1.800"/></svg></button></div>
   <div class="bgroup d-flex"><button class="plain" aria-label="Configuración"><svg width="24" height="24" viewBox="0 0 24 24"><circle cx="12" cy="12" r="6" fill="none" stroke="currentColor" stroke-width="4"/><circle cx="12" cy="12" r="9.500" fill="none" stroke="currentColor" stroke-width="4" stroke-dasharray="3 4.460"/></svg></button><button class="plain" aria-label="Propiedades"><svg width="17" height="24" viewBox="0 0 17 24"><path d="M1 1h15v22H1z" fill="none" stroke="currentColor" stroke-width="2"/><circle cx="8.500" cy="7" r="3" fill="currentColor"/><path d="M7.500 8h2v12h-2z" fill="currentColor"/></svg></button><button class="plain" aria-label="Pantalla completa"><svg width="18" height="22" viewBox="0 0 18 22"><path d="M0 0h18v22H0z" fill="currentColor"/><path d="M3 12L14 4M9 3.500h6V9" fill="none" stroke="#111" stroke-width="1.800"/></svg></button></div>
  </div>
  <div class="pager position-absolute d-flex justify-content-center align-items-start gap-3 pt-2"><svg width="6" height="10" class="mt-1" viewBox="0 0 6 10"><path class="ln" d="M5 1L1 5l4 4" stroke-width="1.200"/></svg><svg width="18" height="22" viewBox="0 0 18 22"><g fill="#fff"><rect width="8" height="9" rx="2"/><rect x="10" width="8" height="9" rx="2"/><rect y="11" width="8" height="9" rx="2"/><rect x="10" y="11" width="8" height="9" rx="2"/></g></svg><svg width="6" height="10" class="mt-1" viewBox="0 0 6 10"><path class="ln" d="M1 1l4 4-4 4" stroke-width="1.200"/></svg></div>
 </main>
</div>
</div>
<script src="https://cdn.jsdelivr.net/npm/bootstrap@5.3.0/dist/js/bootstrap.bundle.min.js"></script>
</body>
</html>
